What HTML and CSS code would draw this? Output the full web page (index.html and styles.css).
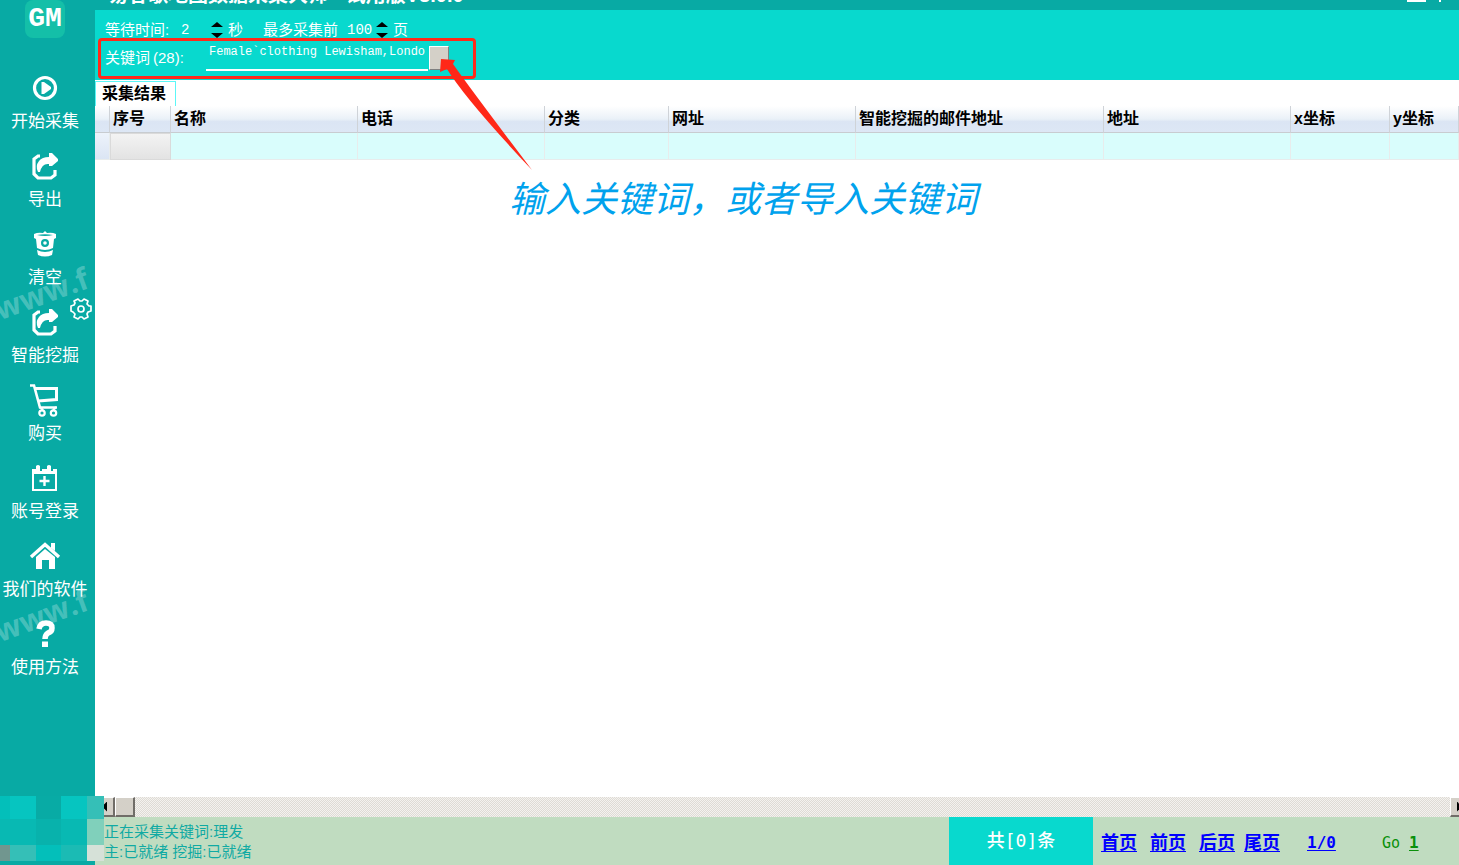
FILE: index.html
```html
<!DOCTYPE html>
<html lang="zh-CN">
<head>
<meta charset="utf-8">
<title>易谷歌地图数据采集大师</title>
<link rel="stylesheet" href="styles.css">
</head>
<body>
<svg class="defs" aria-hidden="true">
  <symbol id="share" viewBox="0 0 28 28">
    <path d="M9 4H7L3 7V22L7 26H20L24 23V18" fill="none" stroke="currentColor" stroke-width="3.200"/>
    <path d="M18 1H21L27 7V9L21 14H18V12Q11 11 9 20H7Q4 14 8 9Q11 5 18 5Z" fill="currentColor"/>
  </symbol>
</svg>
<div class="app">
  <aside class="sidebar">
    <span class="watermark watermark-top">www.f</span>
    <span class="watermark watermark-low">www.f</span>
    <div class="logo">GM</div>
    <nav class="menu">
      <button class="item"><svg class="icon" viewBox="0 0 28 28"><circle cx="14" cy="14" r="10.500" fill="none" stroke="currentColor" stroke-width="3.200"/><path d="M10.500 8H13L20 13V15L13 20H10.500Z" fill="currentColor"/></svg><span>开始采集</span></button>
      <button class="item"><svg class="icon"><use href="#share"/></svg><span>导出</span></button>
      <button class="item"><svg class="icon" viewBox="0 0 28 28"><path fill="currentColor" fill-rule="evenodd" d="M3 4Q7 2 12 3L14 1L16 3Q21 2 25 4V8L23 9L22 18Q14 22 6 18L5 9L3 8ZM6 5Q14 7 22 5Q14 3.500 6 5ZM14 9A4 4 0 1 0 14 17A4 4 0 1 0 14 9ZM6 20Q14 24 22 20L21 25Q14 28 7 25Z"/><circle cx="14" cy="13" r="1.800" fill="currentColor"/></svg><span>清空</span></button>
      <div class="item-group">
        <button class="item"><svg class="icon"><use href="#share"/></svg><span>智能挖掘</span></button>
        <button class="gear" aria-label="设置"><svg viewBox="0 0 24 24"><path d="M9 2L11 4H13L15 2L19 4L18 7L20 9L22 9V14L19 15L18 17L19 20L15 22L13 20H11L9 22L5 20L6 17L4 15L2 14V9L5 8L6 6L5 4Z" fill="none" stroke="currentColor" stroke-width="1.700" stroke-linejoin="round"/><circle cx="12" cy="12" r="3" fill="none" stroke="currentColor" stroke-width="1.700"/></svg></button>
      </div>
      <button class="item"><svg class="icon icon-cart" viewBox="0 0 28 34"><path d="M-1 1.500H3L9 23.500H26" fill="none" stroke="currentColor" stroke-width="2.600"/><path d="M4 4.500H25.500V15.500L7 17" fill="none" stroke="currentColor" stroke-width="3"/><circle cx="11" cy="29" r="2.700" fill="none" stroke="currentColor" stroke-width="2.200"/><circle cx="22.500" cy="29" r="2.700" fill="none" stroke="currentColor" stroke-width="2.200"/><path d="M9 23L12 26M25 23L22 26" stroke="currentColor" stroke-width="2"/></svg><span>购买</span></button>
      <button class="item"><svg class="icon" viewBox="0 0 28 28"><path fill="currentColor" fill-rule="evenodd" d="M1 5H5V2Q7 0 9 2V7H11V5H16V2Q18 0 20 2V7H22V5H26V27H1ZM3 10V25H24V10Z"/><path d="M13.500 12V22M8.500 17H18.500" stroke="currentColor" stroke-width="2.400"/></svg><span>账号登录</span></button>
      <button class="item"><svg class="icon icon-wide" viewBox="0 0 30 28"><path d="M1 15L15 2.500L29 15" fill="none" stroke="currentColor" stroke-width="3.400"/><path d="M21 1H25V9L21 6ZM15 7L25 15V27H19V18H12V27H6V15Z" fill="currentColor"/></svg><span>我们的软件</span></button>
      <button class="item"><svg class="icon" viewBox="0 0 28 28"><path d="M8 9Q9 3 15 3Q21 3 21 8Q21 12 17 13Q14 15 14 19" fill="none" stroke="currentColor" stroke-width="5.500"/><path d="M11 21.500H17V27H11Z" fill="currentColor"/></svg><span>使用方法</span></button>
    </nav>
    <div class="mosaic" aria-hidden="true">
      <i class="m1"></i><i class="m2"></i><i class="m3"></i><i class="m2"></i><i class="m4"></i>
      <i class="m5"></i><i class="m5"></i><i class="m6"></i><i class="m5"></i><i class="m7"></i>
      <i class="m8"></i><i class="m4"></i><i class="m1"></i><i class="m9"></i><i class="m10"></i>
    </div>
  </aside>
  <main class="main">
    <header class="titlebar">
      <h1 class="title">易谷歌地图数据采集大师 - 试用版V3.0.0</h1>
      <span class="window-controls"><i class="minimize"></i><i class="close"></i></span>
    </header>
    <form class="options">
      <div class="row">
        <label class="wait" for="wait">等待时间:</label>
        <input class="number" id="wait" value="2">
        <span class="spinner"><button type="button" class="up" aria-label="增加"></button><button type="button" class="down" aria-label="减少"></button></span>
        <span class="seconds">秒</span>
        <label class="pages" for="pages">最多采集前</label>
        <input class="number" id="pages" value="100">
        <span class="spinner"><button type="button" class="up" aria-label="增加"></button><button type="button" class="down" aria-label="减少"></button></span>
        <span>页</span>
      </div>
      <div class="row keywords">
        <label class="keyword-label" for="keyword">关键词<span class="count">(28):</span></label>
        <input class="keyword" id="keyword" value="Female`clothing Lewisham,Londo">
        <button type="button" class="import" aria-label="导入关键词"></button>
      </div>
      <div class="highlight"></div>
    </form>
    <div class="tabs"><button class="tab">采集结果</button></div>
    <section class="results">
      <table class="grid">
        <colgroup><col class="c-mark"><col class="c-no"><col class="c-wide"><col class="c-wide"><col class="c-kind"><col class="c-wide"><col class="c-mail"><col class="c-wide"><col class="c-x"><col></colgroup>
        <thead><tr><th></th><th>序号</th><th>名称</th><th>电话</th><th>分类</th><th>网址</th><th>智能挖掘的邮件地址</th><th>地址</th><th>x坐标</th><th>y坐标</th></tr></thead>
        <tbody><tr><td class="mark"></td><td class="number-cell"></td><td></td><td></td><td></td><td></td><td></td><td></td><td></td><td></td></tr></tbody>
      </table>
    </section>
    <div class="scrollbar"><button class="scroll-button" aria-label="向左"><i class="left"></i></button><div class="thumb"></div><button class="scroll-button scroll-end" aria-label="向右"><i class="right"></i></button></div>
    <footer class="footer">
      <div class="status"><p>正在采集关键词:理发</p><p>主:已就绪 挖掘:已就绪</p></div>
      <div class="total">共[0]条</div>
      <nav class="pager">
        <a href="#">首页</a><a href="#">前页</a><a href="#">后页</a><a href="#" class="last">尾页</a>
        <a href="#" class="position">1/0</a><span class="go">Go <a href="#">1</a></span>
      </nav>
    </footer>
  </main>
  <svg class="arrow" viewBox="0 0 92 112"><path d="M1 1L15 2L13 6Q32 33 92 112Q26 42 7 11L0 14Z" fill="#ff2818"/></svg>
  <p class="note">输入关键词，或者导入关键词</p>
</div>
</body>
</html>
```
FILE: styles.css
```css
* { box-sizing: border-box; }
body {
  margin: 0;
  font-family: "Liberation Sans", "Noto Sans CJK SC", sans-serif;
  font-size: 15px;
}
button, input { font: inherit; color: inherit; border: 0; padding: 0; margin: 0; background: none; border-radius: 0; }
p { margin: 0; }
i { display: block; }
.defs { position: absolute; width: 0; height: 0; }
.app {
  position: relative;
  display: grid;
  grid-template-columns: 95px minmax(0, 1fr);
  height: 100vh;
  overflow: hidden;
}

/* sidebar */
.sidebar { position: relative; z-index: 1; background: #08aaa4; color: #fff; }
.logo {
  width: 40px;
  height: 38px;
  margin: 0 0 36px 25px;
  border-radius: 8px;
  background: #14bfa8;
  font: bold 28px/38px "Liberation Mono", monospace;
  text-align: center;
}
.menu { position: relative; display: flex; flex-direction: column; gap: 18px; width: 90px; }
.item {
  display: flex;
  flex-direction: column;
  align-items: center;
  gap: 8px;
  width: 100%;
  font-size: 17px;
  line-height: 24px;
  white-space: nowrap;
}
.item-group { position: relative; }
.icon { display: block; width: 28px; height: 28px; overflow: visible; }
.icon-wide { width: 30px; }
.icon-cart { height: 34px; margin: -2px 0 -4px; }
.gear { position: absolute; left: 69px; top: -11px; width: 24px; height: 24px; }
.gear svg { display: block; }
.watermark {
  position: absolute;
  left: 2px;
  color: rgba(255, 255, 255, 0.26);
  font: bold 30px/36px "Open Sans", sans-serif;
  transform: rotate(-20deg);
  transform-origin: 0 100%;
}
.watermark-top { top: 291px; }
.watermark-low { top: 613px; }
.mosaic {
  position: absolute;
  left: 0;
  bottom: 4px;
  display: grid;
  grid-template: 23px 26px 16px / 10px 26px 25px 26px 17px;
}
.m1 { background: #03bfba; }
.m2 { background: #06c5c0; }
.m3 { background: #08aba5; }
.m4 { background: #35bfb7; }
.m5 { background: #08b9b3; }
.m6 { background: #08b2ac; }
.m7 { background: #80d0bb; }
.m8 { background: #71968f; }
.m9 { background: #1bbbb4; }
.m10 { background: #d6e1d8; }

/* top */
.main { display: flex; flex-direction: column; min-width: 0; background: #fff; }
.titlebar {
  display: flex;
  justify-content: space-between;
  align-items: flex-end;
  height: 10px;
  padding: 0 18px 3px 13px;
  overflow: hidden;
  background: #08aaa4;
  color: #fff;
}
.title { margin: 0; font-size: 20px; line-height: 24px; white-space: nowrap; }
.window-controls { display: flex; align-items: flex-end; gap: 13px; height: 12px; padding-bottom: 5px; }
.minimize { width: 19px; height: 4px; background: #fff; }
.close { width: 2px; height: 4px; background: #fff; }
.options {
  position: relative;
  height: 70px;
  padding: 9px 10px 0;
  background: #08d9ce;
  color: #fff;
}
.row { display: flex; align-items: center; height: 22px; line-height: 22px; white-space: nowrap; }
.wait { width: 76px; }
.number { flex: none; width: 30px; font: 14px/20px "Liberation Mono", monospace; }
.seconds { width: 35px; }
.pages { width: 84px; }
.spinner { display: flex; flex-direction: column; gap: 6px; width: 12px; margin-right: 5px; }
#pages { width: 29px; }
.up, .down { width: 12px; height: 5px; background: #000; }
.up { clip-path: polygon(50% 0, 100% 100%, 0 100%); }
.down { clip-path: polygon(0 0, 100% 0, 50% 100%); }
.keywords { height: 27px; margin-top: 3px; }
.keyword-label { width: 101px; }
.count { margin-left: 3px; }
.keyword {
  width: 222px;
  height: 27px;
  padding: 0 0 9px 3px;
  border-bottom: 2px solid #fff;
  font: 12px/16px "Liberation Mono", monospace;
}
.import {
  width: 20px;
  height: 24px;
  margin-left: 1px;
  background: #d4d0c8;
  border: 1px solid #fff;
  border-right-color: #808080;
  border-bottom-color: #808080;
}
.highlight {
  position: absolute;
  left: 3px;
  top: 28px;
  width: 378px;
  height: 41px;
  border: 3px solid #ff2a1a;
  border-radius: 4px;
  pointer-events: none;
}
.arrow { position: absolute; z-index: 2; left: 440px; top: 58px; width: 92px; height: 112px; }
.note {
  position: absolute;
  left: 509px;
  top: 174px;
  color: #00a2ed;
  font: italic 36px/44px "Noto Sans CJK SC", sans-serif;
  white-space: nowrap;
}

/* table */
.tabs { display: flex; height: 26px; padding-top: 1px; }
.tab {
  width: 81px;
  padding-right: 3px;
  border: 1px solid #5cf7f7;
  border-bottom: 0;
  font-size: 16px;
  line-height: 24px;
  font-weight: bold;
  color: #000;
}
.results { flex: 1; min-height: 0; overflow: hidden; }
.grid { width: 100%; border-collapse: separate; border-spacing: 0; table-layout: fixed; }
.c-mark { width: 15px; }
.c-no { width: 61px; }
.c-wide { width: 187px; }
.c-kind { width: 124px; }
.c-mail { width: 248px; }
.c-x { width: 99px; }
.grid th {
  height: 27px;
  padding: 0 0 0 3px;
  border-right: 1px solid #cfd3d8;
  border-bottom: 1px solid #c8ccd0;
  background: linear-gradient(#fff, #eaf1f8 50%, #dbe5f4 60%, #dde7f5);
  font-size: 16px;
  line-height: 24px;
  text-align: left;
  white-space: nowrap;
}
.grid td { height: 27px; padding: 0; background: #d9fdfc; border-right: 1px solid #e8ecec; border-bottom: 1px solid #e8ecec; }
.grid .mark { background: linear-gradient(#edf3fb, #dbe5f4); }
.grid .number-cell { background: linear-gradient(#f3f3f3, #e3e3e3); border: 1px solid #dadada; }

/* bottom */
.scrollbar {
  display: flex;
  height: 20px;
  overflow: hidden;
  background: repeating-conic-gradient(#dedbd5 0 25%, #f4f2ef 0 50%) 0 0 / 2px 2px;
}
.scroll-button, .thumb {
  flex: none;
  width: 20px;
  height: 20px;
  background: #d4d0c8;
  border: 1px solid #fff;
  border-right: 2px solid #706d68;
  border-bottom: 2px solid #706d68;
}
.scroll-end { margin-left: auto; margin-right: -11px; }
.left, .right { width: 5px; height: 10px; margin-left: 6px; background: #000; }
.left { clip-path: polygon(100% 0, 100% 100%, 0 50%); }
.right { clip-path: polygon(0 0, 100% 50%, 0 100%); }
.footer { display: flex; height: 48px; background: #c0dcc0; }
.status { flex: 1; padding: 5px 0 0 9px; color: #10aaa3; line-height: 20px; white-space: nowrap; }
.total {
  width: 144px;
  background: #08d9ce;
  color: #fff;
  font: 500 18px/48px "DejaVu Sans Mono", "Noto Sans CJK SC", monospace;
  text-align: center;
}
.pager {
  display: flex;
  align-items: center;
  gap: 13px;
  width: 366px;
  padding: 4px 0 0 8px;
  font: bold 18px/24px "DejaVu Sans Mono", "Noto Sans CJK SC", monospace;
  white-space: nowrap;
}
.pager a { color: #00f; font-size: 18px; text-underline-offset: 2px; }
.pager .last { margin-left: -4px; }
.pager .position { margin-left: 14px; font-size: 16px; }
.go { margin-left: 33px; color: #0a900a; font-size: 15px; font-weight: normal; }
.pager .go a { color: #0a900a; font-size: 16px; font-weight: bold; }
```
